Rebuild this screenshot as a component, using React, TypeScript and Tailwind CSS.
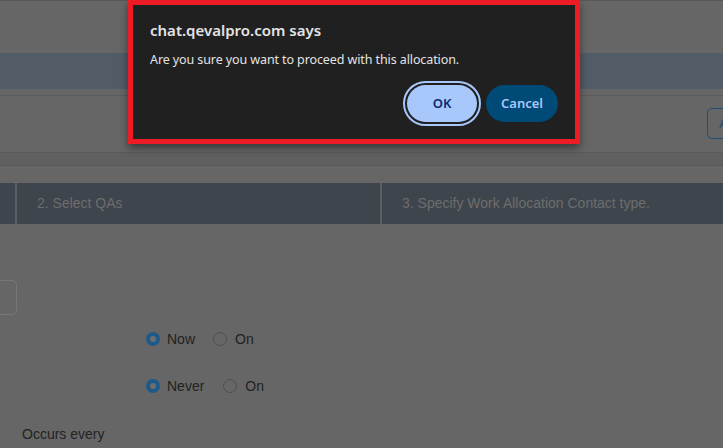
import React from "react";

function Radio({ checked, label, gap }: { checked?: boolean; label: string; gap: string }) {
  return (
    <label className={`flex items-center ${gap}`}>
      {checked ? (
        <span className="flex h-[14px] w-[14px] items-center justify-center rounded-full bg-[#1d5a8a]">
          <span className="h-[6px] w-[6px] rounded-full bg-[#6e6e6e]" />
        </span>
      ) : (
        <span className="h-[14px] w-[14px] rounded-full border border-[#4f4f4f]" />
      )}
      <span>{label}</span>
    </label>
  );
}

export default function App() {
  return (
    <div className="relative h-[448px] w-[723px] overflow-hidden bg-[#666666] font-['Liberation_Sans',Arial,sans-serif] text-[14px] text-[#222]">
      {/* page behind the backdrop */}
      <div className="h-[1px] bg-[#575757]" />
      <div className="h-[52px]" />
      <div className="h-[36px] bg-[#525c66]" />
      <div className="h-[6px]" />
      <div className="h-[1px] bg-[#5c5c5c]" />
      <div className="flex h-[56px] justify-end pr-0 pt-[12px]">
        <div className="mr-[-20px] flex h-[31px] w-[36px] items-center rounded-[5px] border-[1.5px] border-[#1f4d75] pl-[11px] text-[#1f4d75]">
          A
        </div>
      </div>
      <div className="h-[14px] border-y border-[#5a5a5a] bg-[#606060]" />
      <div className="h-[17px]" />

      {/* wizard steps */}
      <div className="flex h-[41px] bg-[#3e454c] text-[#6d6d6d]">
        <div className="w-[17px] border-r-2 border-[#5a5f64]" />
        <div className="flex w-[365px] items-center border-r-2 border-[#5a5f64] pl-[20px]">2. Select QAs</div>
        <div className="flex flex-1 items-center pl-[20px]">3. Specify Work Allocation Contact type.</div>
      </div>

      <div className="pt-[56px]">
        <div className="ml-[-10px] h-[35px] w-[27px] rounded-[5px] border border-[#777777]" />
        <div className="ml-[146px] mt-[16px] flex h-[16px] items-center gap-[18px]">
          <Radio checked label="Now" gap="gap-[7px]" />
          <Radio label="On" gap="gap-[8px]" />
        </div>
        <div className="ml-[146px] mt-[31px] flex h-[16px] items-center gap-[19px]">
          <Radio checked label="Never" gap="gap-[7px]" />
          <Radio label="On" gap="gap-[8px]" />
        </div>
        <div className="ml-[22px] mt-[30px]">Occurs every</div>
      </div>

      {/* browser confirm dialog */}
      <div className="absolute left-[128px] top-0 h-[144px] w-[452px] border-[5px] border-[#ed1c24] bg-[#202020] pl-[17px] pr-[17px] pt-[15px] font-['Noto_Sans',sans-serif] text-[#e3e3e3] shadow-[0_4px_8px_rgba(0,0,0,0.45)]">
        <div className="text-[15px] font-semibold leading-[20px]">chat.qevalpro.com says</div>
        <div className="mt-[10px] text-[12.5px] leading-[20px] tracking-[-0.1px]">Are you sure you want to proceed with this allocation.</div>
        <div className="mt-[15px] flex justify-end gap-[9px]">
          <button className="h-[37px] w-[70px] rounded-full bg-[#a8c7fa] text-[13px] font-semibold text-[#062e6f] outline-2 outline-offset-2 outline-[#a8c7fa]">
            OK
          </button>
          <button className="h-[37px] rounded-full bg-[#004a77] px-[15px] text-[13px] font-semibold text-[#a8c7fa]">
            Cancel
          </button>
        </div>
      </div>
    </div>
  );
}
